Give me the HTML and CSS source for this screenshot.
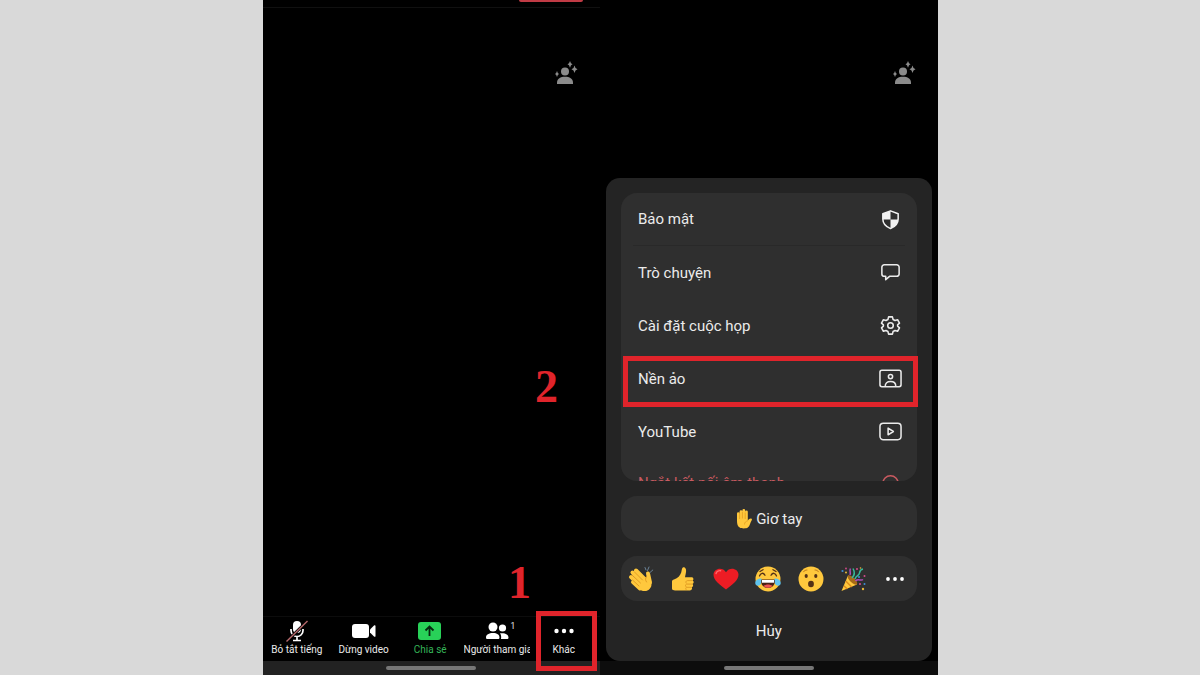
FILE: index.html
```
<!DOCTYPE html>
<html lang="vi">
<head>
  <meta charset="UTF-8">
  <meta name="viewport" content="width=device-width, initial-scale=1">
  <title>Zoom</title>
  <link rel="stylesheet" href="styles.css">
</head>
<body>

  <!-- shared icon -->
  <svg class="defs" aria-hidden="true">
    <symbol id="effects" viewBox="0 0 24 24">
      <circle cx="11" cy="10.500" r="4"/>
      <path d="M3 23v-1.500c0-4 3.500-5.800 8-5.800s8 1.800 8 5.800V23z"/>
      <path d="M16 0l1 2.300 1.500 1-1.500 1-1 2.400-1-2.400-1.500-1 1.500-1zM20.500 4.500l1 2.500 2 1.300-2 1.300-1 2.500-1-2.500-2-1.300 2-1.300zM3 10l.8 2 1.200 1-1.200 1-.8 2-.8-2-1.200-1 1.200-1z"/>
    </symbol>
  </svg>

  <main class="phones">

    <section class="screen">
      <header class="topbar"><span class="end-call"></span></header>
      <div class="video">
        <svg class="effects"><use href="#effects"/></svg>
      </div>

      <nav class="toolbar">
        <button class="tool">
          <svg width="24" height="22" viewBox="0 0 24 22">
            <rect x="8" y="1" width="8" height="12" rx="4" fill="#fff"/>
            <path d="M6 9v1.500a6 6 0 0 0 12 0V9M12 16.500V20M8 20.500h8" fill="none" stroke="#fff" stroke-width="1.700"/>
            <path d="M1.500 21.500L22.500 1" stroke="#000" stroke-width="3"/>
            <path d="M1.500 21.500L22.500 1" stroke="#b5686b" stroke-width="1.400"/>
          </svg>
          <span>Bỏ tắt tiếng</span>
        </button>
        <button class="tool">
          <svg width="24" height="22" viewBox="0 0 24 22" fill="#fff">
            <rect x="0" y="4" width="17" height="14" rx="3"/>
            <path d="M18 9.500l4-4c.8-.6 1.500-.3 1.500.6v9.800c0 .9-.7 1.200-1.500.6l-4-4z"/>
          </svg>
          <span>Dừng video</span>
        </button>
        <button class="tool share">
          <svg width="24" height="22" viewBox="0 0 24 22">
            <rect x="0" y="2" width="23" height="18" rx="3" fill="#28d158"/>
            <path d="M11.500 16V7M7.500 10.500l4-4 4 4" fill="none" stroke="#06260f" stroke-width="1.800"/>
          </svg>
          <span>Chia sẻ</span>
        </button>
        <button class="tool clip">
          <svg width="24" height="22" viewBox="0 0 24 22" fill="#fff">
            <circle cx="8" cy="7" r="4.500"/>
            <circle cx="17.500" cy="8" r="3.600"/>
            <path d="M1 17.500C1 14.500 4 13 8 13s6.500 1.500 6.500 4.500c0 1-.7 1.500-1.500 1.500H2.500C1.600 19 1 18.500 1 17.500zM15 13.300c5-.7 8.500 1 8.500 4.200 0 1-.6 1.500-1.500 1.500h-6c.4-2.300.2-4-1-5.700z"/>
          </svg>
          <sup class="count">1</sup>
          <span>Người tham gia</span>
        </button>
        <button class="tool">
          <svg width="24" height="22" viewBox="0 0 24 22" fill="#fff">
            <circle cx="4.500" cy="11" r="2.200"/><circle cx="12" cy="11" r="2.200"/><circle cx="19.500" cy="11" r="2.200"/>
          </svg>
          <span>Khác</span>
          <i class="mark mark-more"></i>
        </button>
      </nav>
      <div class="navbar"><span class="pill"></span></div>

      <b class="step step-two">2</b>
      <b class="step step-one">1</b>
    </section>

    <section class="screen">
      <div class="topbar plain"></div>
      <div class="video">
        <svg class="effects"><use href="#effects"/></svg>
      </div>

      <div class="sheet">
        <div class="menu">
          <button class="item first">Bảo mật
            <svg viewBox="0 0 24 24">
              <path d="M12 3l8 3v5.500c0 4.700-3.200 8-8 10-4.800-2-8-5.300-8-10V6z" fill="none" stroke="#f2f2f2" stroke-width="1.600" stroke-linejoin="round"/>
              <path d="M12 3v9H4V6zM12 12h8c-.2 4.500-3.300 7.600-8 9.500z" fill="#f2f2f2"/>
            </svg>
          </button>
          <hr>
          <button class="item">Trò chuyện
            <svg viewBox="0 0 24 24" class="line"><path d="M5.500 4h13a2.500 2.500 0 0 1 2.500 2.500v7a2.500 2.500 0 0 1-2.500 2.500H11l-4 3.500V16H5.500A2.500 2.500 0 0 1 3 13.500v-7A2.500 2.500 0 0 1 5.500 4z"/></svg>
          </button>
          <button class="item">Cài đặt cuộc họp
            <svg viewBox="0 0 24 24" class="line">
              <path d="M10 3h4l.7 2.700 2 1.100 2.700-.8 2 3.500-2 1.900v1.200l2 1.900-2 3.500-2.700-.8-2 1.100L14 21h-4l-.7-2.700-2-1.100-2.700.8-2-3.500 2-1.900v-1.200l-2-1.900 2-3.500 2.700.8 2-1.100z"/>
              <circle cx="12" cy="12" r="2.900"/>
            </svg>
          </button>
          <button class="item">Nền ảo
            <svg viewBox="0 0 24 24" class="line">
              <rect x="1" y="3.500" width="22" height="17" rx="2"/>
              <circle cx="12" cy="10" r="2.200"/>
              <path d="M6.500 20c0-3.200 2-4.800 5.500-4.800s5.500 1.600 5.500 4.800"/>
            </svg>
          </button>
          <button class="item">YouTube
            <svg viewBox="0 0 24 24" class="line">
              <rect x="1" y="3.500" width="22" height="17" rx="3.500"/>
              <path d="M9.500 8.500v7l5.500-3.500z"/>
            </svg>
          </button>
          <button class="item danger">Ngắt kết nối âm thanh
            <svg viewBox="0 0 24 24" class="line"><path d="M4 20v-8a8 8 0 0 1 16 0v8"/></svg>
          </button>
        </div>
        <i class="mark mark-item"></i>

        <button class="raise">
          <svg width="18" height="20" viewBox="0 0 18 20">
            <path d="M2 4.500a1.300 1.300 0 0 1 2.600 0V2.600a1.400 1.400 0 0 1 2.800 0V1.500a1.400 1.400 0 0 1 2.800 0v1.300a1.300 1.300 0 0 1 2.600 0V12c.4-1.200 1.600-2.500 3.200-2.400 1.200.1 1.200 1 .6 1.800-1.400 2-1.700 5.500-3.800 7.200-1.500 1.200-6.500 1.200-8.100 0C2.600 17.200 2 15 2 12z" fill="#ffc83d"/>
            <path d="M4.600 4v6M7.400 3v6.500M10.200 3.500V10M12.700 12c-2 .2-3.200 1.500-3.200 3.500" fill="none" stroke="#e09a1a" stroke-width=".7"/>
          </svg>
          Giơ tay
        </button>

        <div class="reactions">
          <button aria-label="Vỗ tay">
            <svg viewBox="0 0 26 26">
              <g fill="none" stroke="#ffc83d" stroke-width="4" stroke-linecap="round">
                <path d="M8 4.500l9 9M4.500 6.500l10 10M3 11l10 9M5 16l7 6.500M20 7.500l2 9"/>
              </g>
              <path d="M11 12l7.500-1 4.500 4c1.300 4 0 7.500-3 9.200-3 1.500-6.500 1-9-1.200z" fill="#ffc83d"/>
              <path d="M6.500 6l8 8M4.500 9.500l8 7.500M4.500 14l6.500 6M18.500 10.500c-1.300 2-1.300 3.500 0 5.500" fill="none" stroke="#dc9620" stroke-width=".9" stroke-linecap="round"/>
              <path d="M17 1.500l1 2.500M21 1l-1.500 3.500M24.800 4L22 6.500" stroke="#6b8296" stroke-width="1" stroke-linecap="round"/>
            </svg>
          </button>
          <button aria-label="Thích">
            <svg viewBox="0 0 26 26">
              <path d="M2 15.500c0-1 .8-1.700 2-2 4-1.300 6-4 7.200-7 .5-1.700.5-4.800 2-5.300 2-.4 3 1.500 2.900 3.800-.1 2-.8 4.500-1.100 6.200h6.500c2.300 0 2.500 2.700 1 3.400 1.800.6 1.500 3-.1 3.500 1.300.8.800 2.900-.7 3.200 1 1.200 0 3.200-1.700 3.200H8c-2.500 0-3.700-.3-5-.6-.8-.3-1-1-1-1.700z" fill="#ffc83d"/>
              <path d="M22.500 14.600h-5c-1.500 0-2 1.600-1.200 2.700M22.500 18.100h-6c-1.300.6-1.300 2-.2 2.800M21.500 21.300h-5c-1 .6-1 2 0 2.600" fill="none" stroke="#dc9620" stroke-width=".9"/>
            </svg>
          </button>
          <button aria-label="Yêu thích">
            <svg viewBox="0 0 26 26">
              <path d="M13 23.500C7 19 .5 14.500.5 8.800.5 2.500 9.500.3 13 6.300 16.500.3 25.500 2.500 25.500 8.800 25.500 14.500 19 19 13 23.500z" fill="#ed1c24"/>
              <path d="M3 7.500C3.600 5 6 4.300 7.600 4.700" fill="none" stroke="#ff686d" stroke-width="1.400" stroke-linecap="round"/>
            </svg>
          </button>
          <button aria-label="Haha">
            <svg viewBox="0 0 26 26">
              <circle cx="13" cy="13" r="12.500" fill="#ffc83d"/>
              <path d="M4.500 10c1-3.500 4-3.500 5.500-.8M16 9.200c1.500-2.700 4.500-2.700 5.500.8M5 5.500l3-1.800M18 3.700l3 1.800" fill="none" stroke="#543116" stroke-width="1.300" stroke-linecap="round"/>
              <path d="M6 13.500h14c.5 5-2.500 8.500-7 8.500s-7.500-3.500-7-8.500z" fill="#4a2114"/>
              <path d="M7 14h12v2.700H7z" fill="#fff"/>
              <path d="M8.500 20c2.500-2 6.500-2 9 0-2.500 2.400-6.500 2.400-9 0z" fill="#ef5350"/>
              <path d="M6.500 12.500C2.500 12.500 0 14.500.3 17.500c.5 3.200 5.200 3 5.900-.5zM19.500 12.500c4 0 6.500 2 6.200 5-.5 3.200-5.200 3-5.900-.5z" fill="#5fc3ee"/>
            </svg>
          </button>
          <button aria-label="Ngạc nhiên">
            <svg viewBox="0 0 26 26">
              <circle cx="13" cy="13" r="12.500" fill="#ffc83d"/>
              <ellipse cx="8.200" cy="10" rx="1.600" ry="2" fill="#543116"/>
              <ellipse cx="17.800" cy="10" rx="1.600" ry="2" fill="#543116"/>
              <ellipse cx="13" cy="18" rx="2.900" ry="3.200" fill="#543116"/>
              <path d="M5.500 5.800C6.300 4.500 7.500 4 9 4M17 4c1.500 0 2.700.5 3.500 1.800" fill="none" stroke="#c27c1a" stroke-width="1" stroke-linecap="round"/>
            </svg>
          </button>
          <button aria-label="Chúc mừng">
            <svg viewBox="0 0 26 26">
              <path d="M1.500 25L8 9.500c3 1 8 5.500 9 9z" fill="#ffc83d"/>
              <path d="M5.700 15l6 6M3.800 19.800l3.500 3.200" stroke="#dc8b1e" stroke-width="1.500"/>
              <ellipse cx="12.500" cy="14" rx="2.500" ry="6.200" transform="rotate(-45 12.500 14)" fill="#a66a18"/>
              <path d="M12 12c3-3 3-6 1-9.500M15 13c1-4 4-3 4.500-6 .3-2 1-3.500 3.500-4" fill="none" stroke="#38b99a" stroke-width="1.500"/>
              <path d="M15.500 15c2.500-3 5.500.5 7.500-1.500M10 9c1-2.500-.8-4 .4-6.500" fill="none" stroke="#b04bbd" stroke-width="1.500"/>
              <g fill="#d44b8c"><circle cx="17" cy="3" r="1"/><circle cx="24.500" cy="10" r="1"/><circle cx="20" cy="18" r="1.100"/><circle cx="6" cy="2.500" r=".9"/></g>
              <g fill="#3e8fd8"><circle cx="2.500" cy="5" r="1.100"/><circle cx="19" cy="11" r="1"/><circle cx="24.500" cy="18" r="1"/></g>
              <g fill="#e8b838"><circle cx="6" cy="6.500" r="1"/><circle cx="23" cy="23" r="1.200"/><circle cx="20.500" cy="2" r=".8"/></g>
            </svg>
          </button>
          <button aria-label="Thêm">
            <svg viewBox="0 0 26 26" fill="#fff"><circle cx="6" cy="13" r="1.900"/><circle cx="13" cy="13" r="1.900"/><circle cx="20" cy="13" r="1.900"/></svg>
          </button>
        </div>

        <button class="cancel">Hủy</button>
      </div>
      <div class="navbar dark"><span class="pill"></span></div>
    </section>

  </main>
</body>
</html>
```

FILE: styles.css
```
* {
  box-sizing: border-box;
}

body {
  margin: 0;
  background: #d9d9d9;
  font-family: Roboto, "Noto Sans", sans-serif;
  color: #ebebeb;
}

button {
  padding: 0;
  border: none;
  background: none;
  color: inherit;
  font: inherit;
  cursor: pointer;
}

.defs {
  position: absolute;
  width: 0;
  height: 0;
}

.phones {
  display: grid;
  grid-template-columns: 1fr 1fr;
  width: 56.25%;
  min-width: 640px;
  min-height: 100vh;
  margin: 0 auto;
  background: #000;
}

.screen {
  position: relative;
  display: flex;
  flex-direction: column;
  min-width: 0;
}

.topbar {
  display: flex;
  justify-content: flex-end;
  height: 8px;
  padding-right: 17px;
  border-bottom: 1px solid #101010;
}

.topbar.plain {
  border-color: transparent;
}

.end-call {
  width: 64px;
  height: 2px;
  background: #c13b45;
  border-radius: 0 0 4px 4px;
}

.video {
  display: flex;
  flex: 1;
  justify-content: flex-end;
  align-items: flex-start;
  padding: 53px 22px 0 0;
}

.effects {
  width: 24px;
  height: 24px;
  fill: #8b8b8b;
}

/* bottom toolbar */
.toolbar {
  display: grid;
  grid-template-columns: repeat(5, 1fr);
  height: 45px;
  padding: 0 3px 0 1px;
  border-top: 1px solid #0c0c0c;
}

.tool {
  position: relative;
  display: flex;
  flex-direction: column;
  align-items: center;
  gap: 1px;
  min-width: 0;
  padding-top: 3px;
  font-size: 10px;
  line-height: 14px;
  white-space: nowrap;
}

.tool svg {
  flex: none;
}

.share {
  color: #35b558;
}

.clip span {
  width: 100%;
  overflow: hidden;
  text-align: left;
}

.count {
  position: absolute;
  top: 3px;
  right: 15px;
  line-height: 12px;
}

.navbar {
  display: flex;
  justify-content: center;
  align-items: center;
  height: 14px;
  background: #222;
}

.navbar.dark {
  background: #0d0d0d;
}

.pill {
  width: 90px;
  height: 4px;
  border-radius: 2px;
  background: #777;
}

/* "more" sheet */
.sheet {
  position: relative;
  display: flex;
  flex-direction: column;
  gap: 15px;
  margin: 0 6px;
  padding: 15px;
  border-radius: 14px;
  background: #242424;
  font-size: 15px;
}

.menu {
  height: 288px;
  overflow: hidden;
  border-radius: 16px;
  background: #2f2f2f;
}

.menu hr {
  height: 1px;
  margin: 0 12px;
  border: none;
  background: #292929;
}

.item {
  display: flex;
  justify-content: space-between;
  align-items: center;
  width: 100%;
  height: 53px;
  padding: 0 15px 0 17px;
  text-align: left;
}

.item.first {
  height: 52px;
}

.item svg {
  width: 23px;
  height: 23px;
}

.line {
  fill: none;
  stroke: #ebebeb;
  stroke-width: 1.6;
  stroke-linejoin: round;
}

.item.danger {
  height: 50px;
  color: #c85a60;
}

.danger .line {
  stroke: #c85a60;
}

.raise,
.reactions {
  display: flex;
  justify-content: center;
  align-items: center;
  height: 45px;
  border-radius: 16px;
  background: #2f2f2f;
}

.raise {
  gap: 3px;
}

.reactions {
  justify-content: space-between;
  padding: 0 8px 0 7px;
}

.reactions button,
.reactions svg {
  display: block;
  width: 26px;
  height: 26px;
}

.cancel {
  height: 30px;
}

/* step marks */
.mark {
  position: absolute;
  border: 5px solid #e0242b;
}

.mark-more {
  inset: -6px 0 -10px 6px;
}

.mark-item {
  top: 178px;
  left: 17px;
  right: 14px;
  height: 51px;
}

.step {
  position: absolute;
  color: #e0242b;
  font-family: "Liberation Serif", serif;
  font-size: 46px;
  line-height: 46px;
}

.step-two {
  right: 42px;
  bottom: 265px;
}

.step-one {
  right: 69px;
  bottom: 69px;
}
```
